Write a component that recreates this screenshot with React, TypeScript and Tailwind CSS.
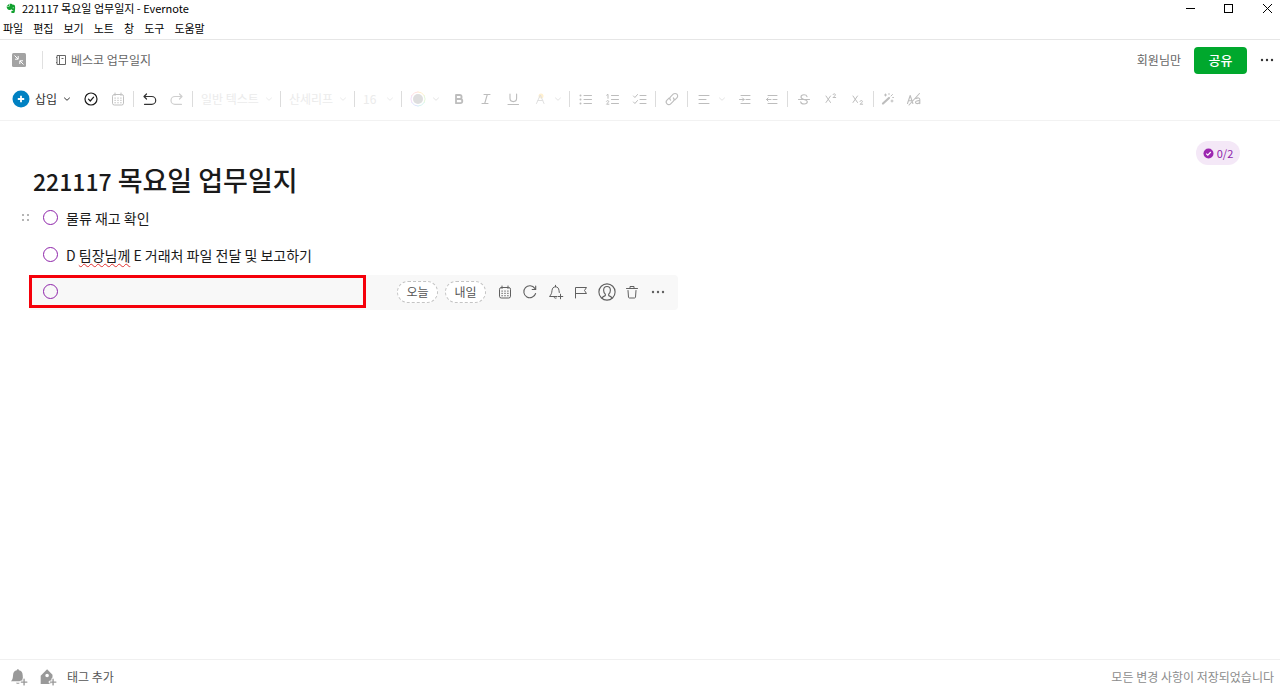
import { useState } from "react";
import type { ReactNode } from "react";

type IconProps = { size?: number; className?: string; children: ReactNode; weight?: number };

function Icon({ size = 16, className = "", children, weight = 1 }: IconProps) {
  return (
    <svg
      width={size}
      height={size}
      viewBox="0 0 16 16"
      fill="none"
      stroke="currentColor"
      strokeWidth={weight}
      strokeLinecap="round"
      strokeLinejoin="round"
      aria-hidden="true"
      className={"shrink-0 " + className}
    >
      {children}
    </svg>
  );
}

function Chevron({ className = "" }: { className?: string }) {
  return (
    <svg width="8" height="8" viewBox="0 0 8 8" fill="none" stroke="currentColor" aria-hidden="true" className={"shrink-0 " + className}>
      <path d="M1.2 2.7 4 5.3 6.8 2.7" />
    </svg>
  );
}

function Calendar({ size = 16 }: { size?: number }) {
  return (
    <Icon size={size}>
      <rect x="2.5" y="3.5" width="11" height="10.5" rx="1.8" />
      <path d="M5 2v2.5M11 2v2.5" />
      <g fill="currentColor" stroke="none">
        <rect x="4.5" y="6.5" width="1.2" height="1.2" />
        <rect x="7.4" y="6.5" width="1.2" height="1.2" />
        <rect x="10.3" y="6.5" width="1.2" height="1.2" />
        <rect x="4.5" y="8.8" width="1.2" height="1.2" />
        <rect x="7.4" y="8.8" width="1.2" height="1.2" />
        <rect x="10.3" y="8.8" width="1.2" height="1.2" />
        <rect x="4.5" y="11.1" width="1.2" height="1.2" />
        <rect x="7.4" y="11.1" width="1.2" height="1.2" />
        <rect x="10.3" y="11.1" width="1.2" height="1.2" />
      </g>
    </Icon>
  );
}

function Dots() {
  return (
    <Icon>
      <g fill="currentColor" stroke="none">
        <circle cx="3" cy="8" r="1.2" />
        <circle cx="8" cy="8" r="1.2" />
        <circle cx="13" cy="8" r="1.2" />
      </g>
    </Icon>
  );
}

function Tool({ label, className = "text-[#bdbdbd]", children }: { label: string; className?: string; children: ReactNode }) {
  return (
    <button type="button" aria-label={label} className={"flex h-6 w-[27px] shrink-0 items-center justify-center " + className}>
      {children}
    </button>
  );
}

function MoreTool({ label }: { label: string }) {
  return (
    <button type="button" aria-label={label} className="flex h-6 w-[14px] shrink-0 items-center pl-px text-[#e4e4e4]">
      <Chevron />
    </button>
  );
}

function Divider() {
  return <span className="mx-[2px] h-4 w-px shrink-0 bg-[#dcdcdc]" />;
}

function Picker({ label, value, className }: { label: string; value: string; className: string }) {
  return (
    <label className={"relative flex shrink-0 items-center text-xs text-[#ebebeb] " + className}>
      <select aria-label={label} defaultValue={value} className="h-6 w-full appearance-none bg-transparent pl-1.5 outline-none">
        <option>{value}</option>
      </select>
      <Chevron className="pointer-events-none absolute right-[5px]" />
    </label>
  );
}

function TitleBar() {
  return (
    <header className="border-b border-[#e6e6e6] text-[11px] text-black">
      <div className="flex h-[17px] items-center">
        <svg width="10" height="11" viewBox="0 0 12 12" fill="#12a12f" className="ml-[6px] shrink-0" aria-hidden="true">
          <path d="M3.6.5v2.400H1z" />
          <path d="M4.300.4h2c.7 0 1 .4 1.200.8l2 .3c.8.100 1.200.7 1.300 1.500.3 1.800.2 4.700-.3 6.800-.3 1.200-.8 1.700-1.600 1.700H7.700c-.9 0-1.400-.6-1.400-1.400 0-.8.5-1.400 1.400-1.400h.9v-.8c-.9.2-1.700-.1-2.300-.9C5.700 8 5 8 4.200 7.800 2.200 7.500.8 6 .7 3.600h2.900c.5 0 .7-.3.7-.7z" />
          <circle cx="8.600" cy="5" r=".6" fill="#fff" />
        </svg>
        <h1 className="ml-[6px]">221117 목요일 업무일지 - Evernote</h1>
        <div className="ml-auto flex items-center">
          <button type="button" aria-label="최소화" className="flex w-[38px] justify-center">
            <svg width="11" height="11" viewBox="0 0 11 11" stroke="#000"><path d="M1 5.500h9" /></svg>
          </button>
          <button type="button" aria-label="최대화" className="flex w-[39px] justify-center">
            <svg width="11" height="11" viewBox="0 0 11 11" fill="none" stroke="#000"><rect x="1.500" y="1.500" width="8" height="8" /></svg>
          </button>
          <button type="button" aria-label="닫기" className="flex w-8 justify-end pr-[7px]">
            <svg width="11" height="11" viewBox="0 0 11 11" fill="none" stroke="#000"><path d="m1 1 9 9M10 1l-9 9" /></svg>
          </button>
        </div>
      </div>
      <nav className="flex h-[22px] items-center gap-[10px] pt-px pl-[3px]">
        {["파일", "편집", "보기", "노트", "창", "도구", "도움말"].map((item) => (
          <button key={item} type="button">{item}</button>
        ))}
      </nav>
    </header>
  );
}

function NoteBar() {
  return (
    <div className="flex h-10 items-center text-xs text-[#666]">
      <button type="button" aria-label="노트 축소" className="ml-3">
        <svg width="14" height="14" viewBox="0 0 14 14" fill="none" aria-hidden="true">
          <rect width="14" height="14" rx="1.500" fill="#a3a3a3" />
          <path d="m2.500 2.500 3.500 3.500M6.200 3v3.200H3M11.500 11.500 8 8M7.800 11V7.800H11" stroke="#fff" />
        </svg>
      </button>
      <span className="ml-4 h-[18px] w-px bg-[#e0e0e0]" />
      <a href="#notebook" className="ml-3 flex items-center gap-1">
        <svg width="12" height="12" viewBox="0 0 12 12" fill="none" stroke="currentColor" aria-hidden="true">
          <path d="M2 1.500h8.500v9H2zM4.500 1.500v9M6.500 4.500h2M1 3.500h1M1 8.500h1" />
        </svg>
        베스코 업무일지
      </a>
      <span className="ml-auto">회원님만</span>
      <button type="button" className="ml-[13px] h-[27px] w-[53px] rounded bg-[#00a82d] text-[13px] font-medium text-white">
        공유
      </button>
      <button type="button" aria-label="더 보기" className="mr-[5px] ml-3 text-[#333]">
        <Dots />
      </button>
    </div>
  );
}

function Toolbar() {
  return (
    <div role="toolbar" aria-label="서식" className="flex h-[41px] items-center border-b border-[#f2f2f2] pb-[2px] pl-3">
      <button type="button" className="flex w-[65px] shrink-0 items-center text-xs text-[#333]">
        <svg width="18" height="18" viewBox="0 0 18 18" aria-hidden="true" className="shrink-0">
          <circle cx="9" cy="9" r="8.500" fill="#0081c2" />
          <path d="M9 5.800v6.400M5.800 9h6.400" stroke="#fff" strokeWidth="1.800" />
        </svg>
        <span className="ml-[5px]">삽입</span>
        <Chevron className="ml-1.5" />
      </button>
      <Tool label="작업" className="text-[#1a1a1a]">
        <Icon weight={1.2}><circle cx="8" cy="8" r="6" /><path d="m5.500 8.200 1.800 1.800 3.300-3.800" /></Icon>
      </Tool>
      <Tool label="캘린더" className="text-[#c0c0c0]"><Calendar /></Tool>
      <Divider />
      <Tool label="실행 취소" className="text-[#333]">
        <Icon weight={1.200}><path d="M4.500 3 2 5.500 4.500 8M2 5.500h7.800a3.900 3.900 0 0 1 0 7.800H2.500" /></Icon>
      </Tool>
      <Tool label="다시 실행" className="text-[#cfcfcf]">
        <Icon weight={1.200}><path d="M10.500 3 13 5.500 10.500 8M13 5.500H5.900a3.900 3.900 0 0 0 0 7.800h6.600" /></Icon>
      </Tool>
      <Divider />
      <Picker label="텍스트 스타일" value="일반 텍스트" className="w-[83px]" />
      <Divider />
      <Picker label="글꼴" value="산세리프" className="w-[69px]" />
      <Divider />
      <Picker label="글꼴 크기" value="16" className="w-[42px]" />
      <Divider />
      <Tool label="글자 색">
        <Icon>
          <circle cx="8" cy="8" r="5" fill="#dedede" stroke="none" />
          <path d="M8 .9a7.100 7.100 0 0 1 6.200 3.600" stroke="#fff0cc" />
          <path d="M14.200 4.500a7.100 7.100 0 0 1 0 7" stroke="#e4f7da" />
          <path d="M14.200 11.500A7.100 7.100 0 0 1 8 15.100" stroke="#d5f4f1" />
          <path d="M8 15.100a7.100 7.100 0 0 1-6.200-3.600" stroke="#dce4fc" />
          <path d="M1.800 11.500a7.100 7.100 0 0 1 0-7" stroke="#f3def9" />
          <path d="M1.800 4.500A7.100 7.100 0 0 1 8 .9" stroke="#ffe0e0" />
        </Icon>
      </Tool>
      <MoreTool label="색 옵션" />
      <Tool label="굵게">
        <Icon weight={1.800}><path d="M5 4h3.600a2 2 0 0 1 0 4H5zM5 8h4.200a2.100 2.100 0 0 1 0 4.200H5z" /></Icon>
      </Tool>
      <Tool label="기울임">
        <Icon weight={1.100}><path d="M6 3.500h6M4 12.500h6M9.300 3.500l-2.600 9" /></Icon>
      </Tool>
      <Tool label="밑줄">
        <Icon weight={1.100}><path d="M5 3v4.300a3.300 3.300 0 0 0 6.600 0V3M3 13.500h10.500" /></Icon>
      </Tool>
      <Tool label="강조" className="text-[#e0e0e0]">
        <Icon><circle cx="9" cy="5" r="2.500" fill="#fff0d0" stroke="none" /><path d="M4.500 12.500 8.300 4l3.700 8.500M5.800 9.500h5" /></Icon>
      </Tool>
      <MoreTool label="강조 옵션" />
      <Divider />
      <Tool label="글머리 기호 목록">
        <Icon><path d="M6 4.500h7.500M6 8.500h7.500M6 12.500h7.500" /><g fill="currentColor" stroke="none"><circle cx="2.500" cy="4.500" r="1" /><circle cx="2.500" cy="8.500" r="1" /><circle cx="2.500" cy="12.500" r="1" /></g></Icon>
      </Tool>
      <Tool label="번호 목록">
        <Icon><path d="M6.500 4.500h7M6.500 8.500h7M6.500 12.500h7M1.700 4.200l1.300-.9v4M1.500 10.200c.4-1 2.400-.8 2.200.4-.1.800-1.500 1.600-2.200 2.600h2.400" /></Icon>
      </Tool>
      <Tool label="체크리스트">
        <Icon><path d="M8 4.500h6M8 8.500h6M8 12.500h6M1.500 5 2.900 6.500 5.500 3.500M1.500 11l1.400 1.500 2.600-3" /></Icon>
      </Tool>
      <Divider />
      <Tool label="링크">
        <Icon weight={1.100}><path d="m6.600 9.200-.1-.1a2.300 2.300 0 0 1 0-3.200l2.700-2.700a2.550 2.550 0 0 1 3.700 3.700l-2 2M9.300 6.900l.1.100a2.300 2.300 0 0 1 0 3.200l-2.700 2.700A2.550 2.550 0 0 1 3 9.200l2-2" /></Icon>
      </Tool>
      <Divider />
      <Tool label="정렬">
        <Icon><path d="M3 4.500h10M3 8.500h7M3 12.500h10" /></Icon>
      </Tool>
      <MoreTool label="정렬 옵션" />
      <Tool label="들여쓰기">
        <Icon><path d="M4 4.500h9M9 8.500h4M4 12.500h9M2.500 8.500h4.500M5.500 6.900 7.100 8.500 5.500 10.100" /></Icon>
      </Tool>
      <Tool label="내어쓰기">
        <Icon><path d="M4 4.500h9M9 8.500h4M4 12.500h9M2.500 8.500h4.500M4.100 6.900 2.500 8.500l1.600 1.600" /></Icon>
      </Tool>
      <Divider />
      <Tool label="취소선">
        <Icon weight={1.100}><path d="M11 5.700C10.700 4.400 9.500 3.800 8 3.800c-1.700 0-3 .8-3 2.200 0 1.500 1.300 2 3 2.500 2 .5 3.300 1 3.300 2.300 0 1.400-1.400 2.200-3.200 2.200-1.900 0-3.200-.8-3.400-2.200M2.500 8.500h11" /></Icon>
      </Tool>
      <Tool label="위 첨자">
        <Icon><path d="m3 5 4.500 6.500M7.500 5 3 11.500M10 3.600c.4-1.300 2.600-1 2.400.4-.1 1-1.700 1.500-2.400 2.500h2.700" /></Icon>
      </Tool>
      <Tool label="아래 첨자">
        <Icon><path d="m3 5 4.500 6.500M7.500 5 3 11.500M10 10.300c.4-1.300 2.600-1 2.400.4-.1 1-1.700 1.500-2.400 2.500h2.700" /></Icon>
      </Tool>
      <Divider />
      <button type="button" aria-label="서식 간소화" className="flex h-6 w-6 shrink-0 items-center justify-center text-[#bdbdbd]">
        <Icon><path d="M3 12.500 9 7" strokeWidth="2.200" /><path d="M5.500 3v2M4.500 4h2M12 9v2M11 10h2M11 5l1.500-1.500M9 2.500v1M13.500 6.500h-.8" /></Icon>
      </button>
      <Tool label="서식 제거">
        <Icon weight={1.100}><path d="M1.500 12.500 4.200 4.500l2.700 8M2.500 9.800h3.400M3 14 13.500 2.500M10 7.600c1.800-1.200 3.800-.8 3.800 1v4M13.800 9.700c-2.200-.2-4.300.2-4.300 1.600 0 1.800 3.300 1.700 4.300 0" /></Icon>
      </Tool>
    </div>
  );
}

function Check({ label }: { label: string }) {
  return (
    <input
      type="checkbox"
      aria-label={label}
      className="size-[15px] shrink-0 appearance-none rounded-full border border-[#8e24aa] bg-transparent checked:bg-[#8e24aa]"
    />
  );
}

function TaskAction({ label, children }: { label: string; children: ReactNode }) {
  return (
    <button type="button" aria-label={label} className="flex h-6 w-[25px] items-center justify-center">
      {children}
    </button>
  );
}

function DraftTask() {
  const [text, setText] = useState("");
  return (
    <li className="mt-[2px] ml-[29px] flex h-[35px] w-[649px] max-w-full items-start rounded bg-[#f8f8f8]">
      <div className="flex h-[33px] w-[337px] items-center border-[3px] border-[#f5000a] pl-[11px]">
        <Check label="새 작업 완료" />
        <input
          aria-label="새 작업"
          value={text}
          onChange={(event) => setText(event.target.value)}
          className="ml-2 min-w-0 flex-1 bg-transparent outline-none"
        />
      </div>
      <div className="ml-[31px] flex h-[34px] items-center gap-[7px] text-xs text-[#555]">
        <button type="button" className="h-[22px] w-[41px] rounded-full border border-dashed border-[#c4c4c4] bg-white">오늘</button>
        <button type="button" className="h-[22px] w-[41px] rounded-full border border-dashed border-[#c4c4c4] bg-white">내일</button>
        <div className="-ml-px flex w-[178px] justify-between text-[#606060]">
          <TaskAction label="마감일"><Calendar /></TaskAction>
          <TaskAction label="반복">
            <Icon weight={1.100}><path d="M13.600 9.500A6 6 0 1 1 12.800 4.400M13.700 2v3.500h-3.500" /></Icon>
          </TaskAction>
          <TaskAction label="알림 추가">
            <Icon><path d="M9 12.500H1.500C3.300 10.500 3.800 9 4 6.500c.2-2.300 1.500-3.700 3.500-3.700s3.300 1.400 3.500 3.700l.3 2M7.500 1.300v1.500M6 13c.2 1 1.200 1.500 2.200 1.100M12.500 10.200v4.600M10.200 12.500h4.600" /></Icon>
          </TaskAction>
          <TaskAction label="깃발">
            <Icon><path d="M2.500 14V3.500h11L11.500 6.500l2 3h-11" /></Icon>
          </TaskAction>
          <TaskAction label="담당자">
            <Icon size={18}><circle cx="8" cy="8" r="7.200" /><path d="M3.600 13.500c.3-1.400 1.400-1.900 2.900-2.300v-1.300C5.400 9.100 5 7.900 5 6.500c0-2 1.100-3.400 3-3.400s3 1.400 3 3.400c0 1.400-.4 2.600-1.500 3.400v1.300c1.500.4 2.600.9 2.900 2.300" /></Icon>
          </TaskAction>
          <TaskAction label="삭제">
            <Icon><path d="M2.500 4.500h11M6 4.300V2.500h4v1.800M4 6.500l.5 6.700c.1.500.4.800.9.800h5.200c.5 0 .8-.3.900-.8l.5-6.700" /></Icon>
          </TaskAction>
          <TaskAction label="더 보기"><Dots /></TaskAction>
        </div>
      </div>
    </li>
  );
}

function Note() {
  return (
    <main className="flex-1 text-[#1a1a1a]">
      <div className="flex justify-end pt-5 pr-10">
        <span className="flex h-6 w-11 items-center justify-center gap-[3px] rounded-full bg-[#f4e8f7] text-[11px] text-[#8e24aa]">
          <svg width="11" height="11" viewBox="0 0 11 11" aria-hidden="true">
            <circle cx="5.500" cy="5.500" r="5" fill="#9c27b0" />
            <path d="m3.200 5.600 1.600 1.600 3-3.200" fill="none" stroke="#fff" strokeWidth="1.200" />
          </svg>
          0/2
        </span>
      </div>
      <h2 className="flex h-[34px] items-baseline gap-[6px] pl-[33px] text-[27px] leading-[30px] font-medium">
        <span className="text-[23px]">221117</span>
        <span>목요일 업무일지</span>
      </h2>
      <ul className="text-sm">
        <li className="flex h-[37px] items-center pl-[22px]">
          <svg width="7" height="7" viewBox="0 0 7 7" fill="#b5b5b5" className="mr-[14px]" aria-hidden="true">
            <rect width="2" height="2" /><rect x="5" width="2" height="2" />
            <rect y="5" width="2" height="2" /><rect x="5" y="5" width="2" height="2" />
          </svg>
          <Check label="물류 재고 확인" />
          <span className="ml-2">물류 재고 확인</span>
        </li>
        <li className="flex h-[37px] items-center pl-[43px]">
          <Check label="거래처 파일 전달" />
          <span className="ml-2">
            D{" "}
            <span className="underline decoration-[#e03131] decoration-wavy decoration-1 underline-offset-2">팀장님께</span>{" "}
            E 거래처 파일 전달 및 보고하기
          </span>
        </li>
        <DraftTask />
      </ul>
    </main>
  );
}

function StatusBar() {
  return (
    <footer className="flex h-[31px] items-center border-t border-[#f0f0f0] pt-1 text-xs text-[#555]">
      <button type="button" aria-label="알림 추가" className="ml-[10px] text-[#999]">
        <Icon size={18}>
          <path d="M7 1.200c.6 0 .9.400.9.900 2.200.4 3.300 2 3.400 4.300l.1 2.300 1.700 3.100H.8c1.300-1.400 1.800-2.500 1.900-5.400.1-2.300 1.300-3.900 3.400-4.300 0-.5.300-.9.900-.9zM5.300 13h3.400c-.3 1.200-3.100 1.200-3.400 0z" fill="currentColor" stroke="none" />
          <path d="M12.500 10v5M10 12.500h5" stroke="#fff" strokeWidth="3" />
          <path d="M12.500 10v5M10 12.500h5" strokeWidth="1.200" />
        </Icon>
      </button>
      <button type="button" className="ml-[11px] flex items-center gap-[10px]">
        <Icon size={18} className="text-[#999]">
          <path d="M7.200 1.200 12 6v8.200H1.500V6.800zM7.200 5a1.600 1.600 0 1 0 0 3.200A1.600 1.600 0 0 0 7.200 5z" fill="currentColor" fillRule="evenodd" stroke="none" />
          <path d="M12.500 10v5M10 12.500h5" stroke="#fff" strokeWidth="3" />
          <path d="M12.500 10v5M10 12.500h5" strokeWidth="1.200" />
        </Icon>
        태그 추가
      </button>
      <span className="mr-[6px] ml-auto text-[#8c8c8c]">모든 변경 사항이 저장되었습니다</span>
    </footer>
  );
}

export default function App() {
  return (
    <div className="flex min-h-screen flex-col bg-white font-['Noto_Sans_CJK_KR',sans-serif]">
      <TitleBar />
      <NoteBar />
      <Toolbar />
      <Note />
      <StatusBar />
    </div>
  );
}
